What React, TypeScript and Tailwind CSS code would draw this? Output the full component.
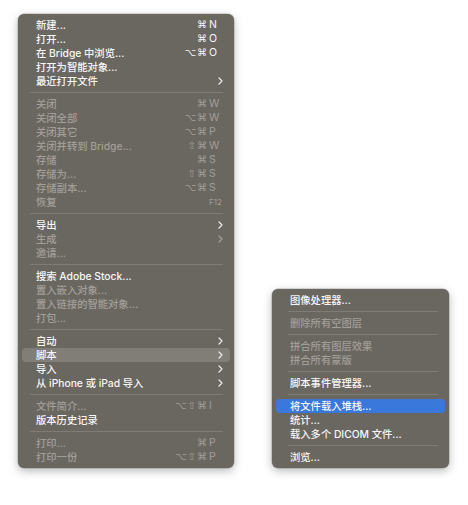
type Item =
  | { sep: true }
  | { label: string; mods?: string; keyName?: string; off?: boolean; sub?: boolean; hover?: boolean; active?: boolean; small?: boolean };

const fileMenu: Item[] = [
  { label: '新建...', mods: '⌘', keyName: 'N' },
  { label: '打开...', mods: '⌘', keyName: 'O' },
  { label: '在 Bridge 中浏览...', mods: '⌥⌘', keyName: 'O' },
  { label: '打开为智能对象...' },
  { label: '最近打开文件', sub: true },
  { sep: true },
  { label: '关闭', mods: '⌘', keyName: 'W', off: true },
  { label: '关闭全部', mods: '⌥⌘', keyName: 'W', off: true },
  { label: '关闭其它', mods: '⌥⌘', keyName: 'P', off: true },
  { label: '关闭并转到 Bridge...', mods: '⇧⌘', keyName: 'W', off: true },
  { label: '存储', mods: '⌘', keyName: 'S', off: true },
  { label: '存储为...', mods: '⇧⌘', keyName: 'S', off: true },
  { label: '存储副本...', mods: '⌥⌘', keyName: 'S', off: true },
  { label: '恢复', keyName: 'F12', off: true, small: true },
  { sep: true },
  { label: '导出', sub: true },
  { label: '生成', sub: true, off: true },
  { label: '邀请...', off: true },
  { sep: true },
  { label: '搜索 Adobe Stock...' },
  { label: '置入嵌入对象...', off: true },
  { label: '置入链接的智能对象...', off: true },
  { label: '打包...', off: true },
  { sep: true },
  { label: '自动', sub: true },
  { label: '脚本', sub: true, hover: true },
  { label: '导入', sub: true },
  { label: '从 iPhone 或 iPad 导入', sub: true },
  { sep: true },
  { label: '文件简介...', mods: '⌥⇧⌘', keyName: 'I', off: true },
  { label: '版本历史记录' },
  { sep: true },
  { label: '打印...', mods: '⌘', keyName: 'P', off: true },
  { label: '打印一份', mods: '⌥⇧⌘', keyName: 'P', off: true },
];

const scriptMenu: Item[] = [
  { label: '图像处理器...' },
  { sep: true },
  { label: '删除所有空图层', off: true },
  { sep: true },
  { label: '拼合所有图层效果', off: true },
  { label: '拼合所有蒙版', off: true },
  { sep: true },
  { label: '脚本事件管理器...' },
  { sep: true },
  { label: '将文件载入堆栈...', active: true },
  { label: '统计...' },
  { label: '载入多个 DICOM 文件...' },
  { sep: true },
  { label: '浏览...' },
];

function Chevron({ off }: { off?: boolean }) {
  return (
    <svg width="5" height="8" viewBox="0 0 5 8" className="ml-[10px]">
      <polyline
        points="1,1 4,4 1,7"
        fill="none"
        stroke={off ? '#a29e98' : '#ececec'}
        strokeWidth="1.2"
        strokeLinecap="round"
        strokeLinejoin="round"
      />
    </svg>
  );
}

function Menu({ items, sepLeft }: { items: Item[]; sepLeft: string }) {
  return (
    <div className="flex flex-col py-1 rounded-[6px] bg-[#6a6761] shadow-[0_3px_10px_rgba(0,0,0,0.28),0_0_0_0.5px_rgba(0,0,0,0.25)]">
      {items.map((it, i) =>
        'sep' in it ? (
          <div key={i} className={`h-[9px] flex items-center ${sepLeft} mr-[11px]`}>
            <div className="h-px w-full bg-[#807c76]" />
          </div>
        ) : (
          <div
            key={i}
            className={`h-[14px] mx-1 pl-[14px] flex items-center rounded-[4px] ${
              it.hover ? 'bg-[#817d77]' : it.active ? 'bg-[#3a78dc]' : ''
            } ${it.off ? 'text-[#a29e98]' : 'text-[#f6f6f6]'}`}
          >
            <span className="flex-1 whitespace-nowrap text-[10.3px] leading-none font-medium">{it.label}</span>
            {(it.mods || it.keyName) && (
              <span className="flex items-center leading-none">
                <span className="text-[10px] tracking-[1px] font-['DejaVu_Sans',sans-serif]">{it.mods}</span>
                <span className={`w-[22px] pl-[1px] ${it.small ? 'text-[8px]' : 'text-[10.5px]'}`}>{it.keyName}</span>
              </span>
            )}
            {it.sub && (
              <span className="w-[22px] flex">
                <Chevron off={it.off} />
              </span>
            )}
          </div>
        )
      )}
    </div>
  );
}

export default function App() {
  return (
    <div className="w-[468px] h-[505px] bg-white font-['Inter','Noto_Sans_CJK_SC',sans-serif]">
      <div className="flex items-end pt-[14px] pl-[18px] gap-[38px]">
        <div className="w-[216px]">
          <Menu items={fileMenu} sepLeft="ml-3" />
        </div>
        <div className="w-[177px]">
          <Menu items={scriptMenu} sepLeft="ml-4" />
        </div>
      </div>
    </div>
  );
}
